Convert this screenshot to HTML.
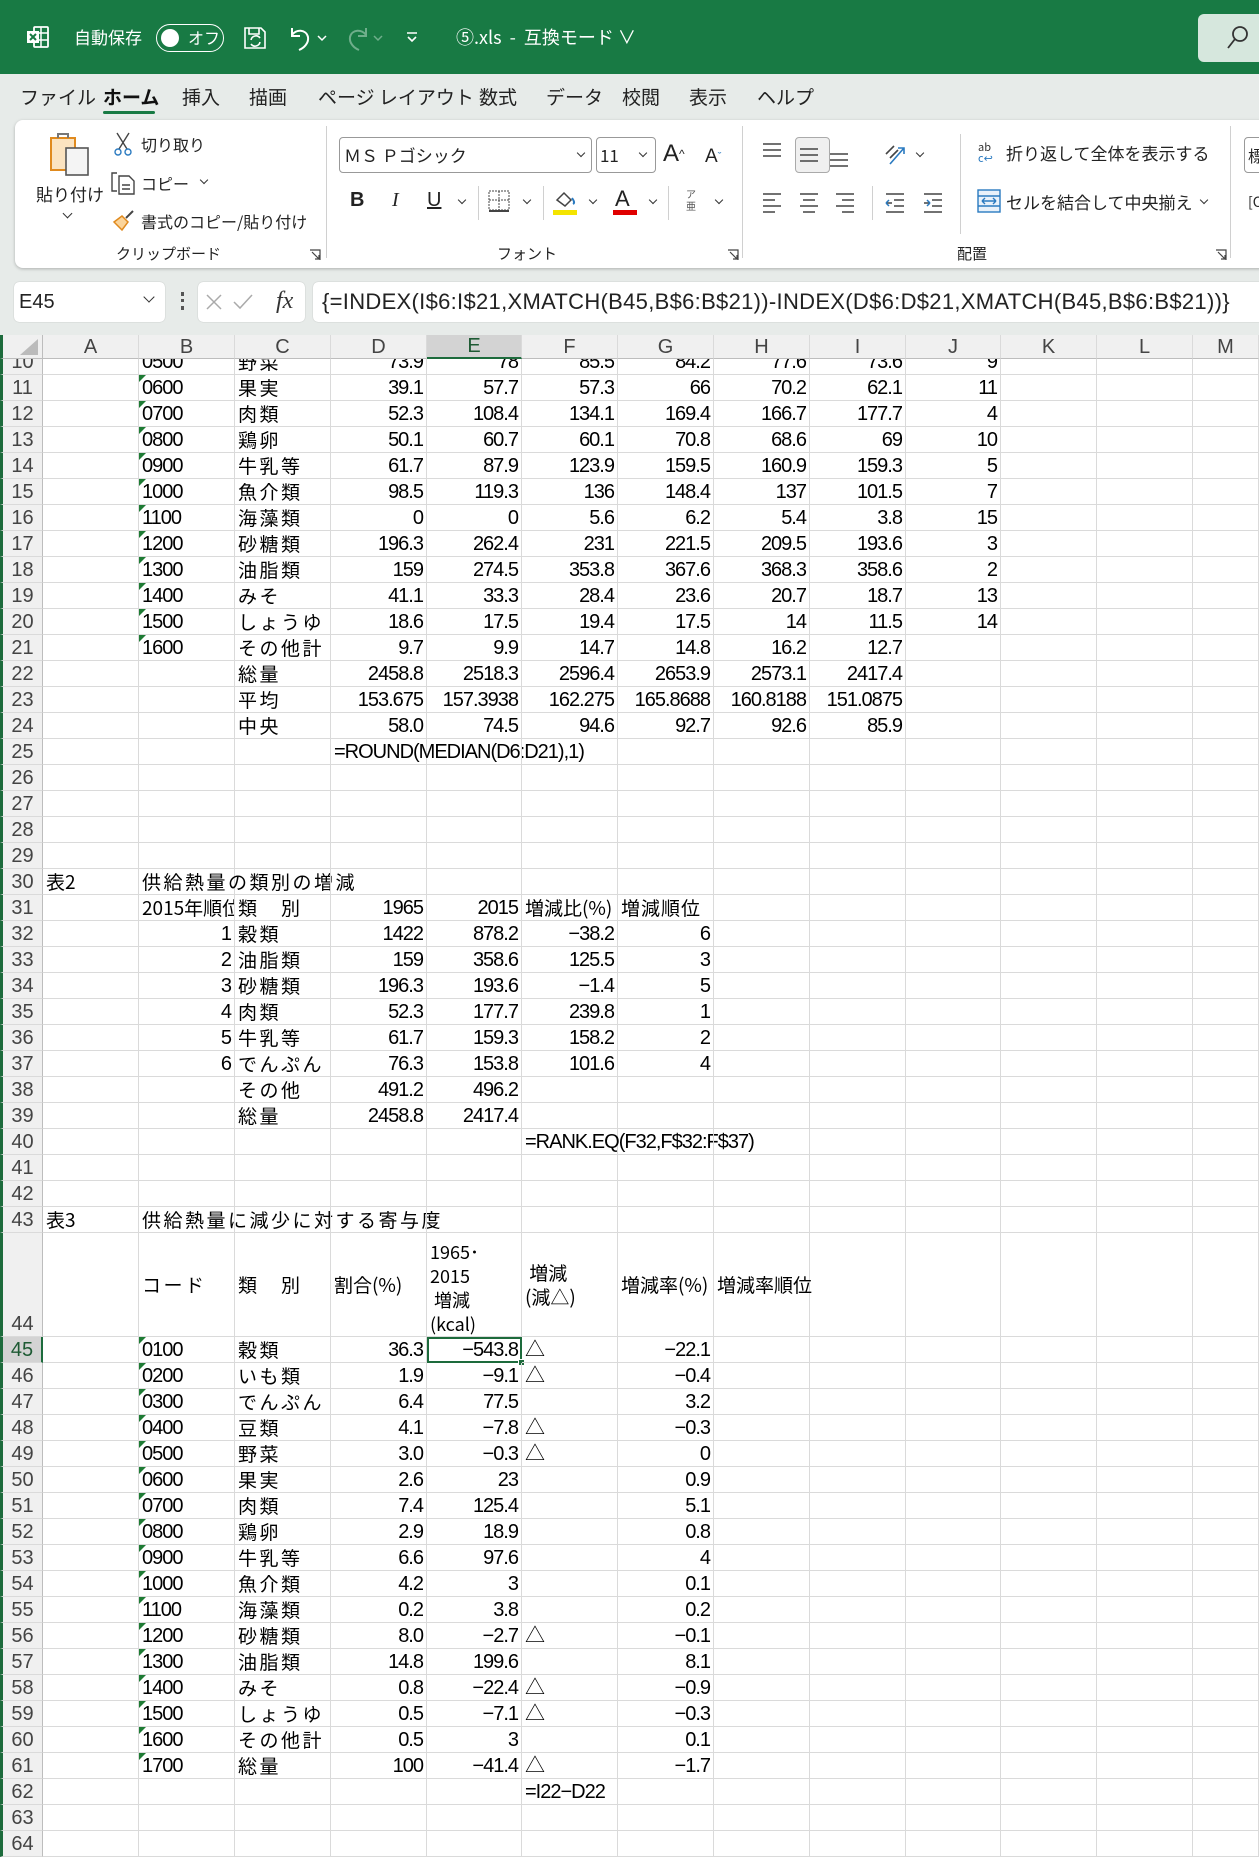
<!DOCTYPE html>
<html><head><meta charset="utf-8">
<style>
*{margin:0;padding:0;box-sizing:border-box}
body{width:1259px;height:1857px;overflow:hidden;background:#fff;font-family:"Liberation Sans","Noto Sans CJK JP",sans-serif;position:relative;color:#000}
.abs{position:absolute}
.jp{font-family:"Noto Sans CJK JP",sans-serif}
#title{left:0;top:0;width:1259px;height:74px;background:#187a44;color:#fff}
#tabs{left:0;top:74px;width:1259px;height:261px;background:#e7ebe9}
.tab{position:absolute;top:84px;font-size:19px;color:#222;font-family:"Noto Sans CJK JP",sans-serif;line-height:26px}
#card{left:15px;top:120px;width:1260px;height:148px;background:#fff;border-radius:8px;box-shadow:0 1px 3px rgba(0,0,0,.25)}
.rt{position:absolute;font-size:16px;color:#222;font-family:"Noto Sans CJK JP",sans-serif;line-height:20px;white-space:nowrap}
.sep{position:absolute;width:1px;background:#d0d0d0}
.chev{position:absolute;width:7px;height:7px;border-right:1.5px solid #333;border-bottom:1.5px solid #333;transform:rotate(45deg)}
.box{position:absolute;background:#fff;border-radius:5px;box-shadow:0 0 1px rgba(0,0,0,.3)}
#grid{left:0;top:335px;width:1259px}
.r{display:flex;width:1259px;overflow:hidden;background:#fff}
.r>div{position:relative;height:100%;border-right:1px solid #dadada;border-bottom:1px solid #dadada;display:flex;align-items:flex-end;white-space:nowrap;padding:0 3px 0 3px;font-size:20px;line-height:24px;letter-spacing:-1px;font-family:"Liberation Sans Narrow","Liberation Sans","Noto Sans CJK JP",sans-serif}
.r>div:nth-child(1){width:43px;border-left:3px solid #1d6b3c;background:#f0f0f0;color:#444;justify-content:center;font-size:20px;letter-spacing:0;border-right:1px solid #bdbdbd;border-bottom:1px solid #dadada}
.r>div:nth-child(2),.r>div:nth-child(3),.r>div:nth-child(4),.r>div:nth-child(5),.r>div:nth-child(7),.r>div:nth-child(8),.r>div:nth-child(9),.r>div:nth-child(10),.r>div:nth-child(12),.r>div:nth-child(13){width:96px}
.r>div:nth-child(6),.r>div:nth-child(11){width:95px}
.r>div:nth-child(14){width:66px}
.r>div:nth-child(n+5):nth-child(-n+11){justify-content:flex-end}
.r>div.L{justify-content:flex-start!important}
.r>div.n{justify-content:flex-end}
.r>div.j{font-family:"Noto Sans CJK JP",sans-serif;font-size:19px;letter-spacing:2.5px}
.r>div.j0{letter-spacing:0}
.t::before{content:"";position:absolute;left:0;top:0;border-top:7px solid #1e7b34;border-right:7px solid transparent}
.h>div{background:#f0f0f0;justify-content:center!important;align-items:center!important;color:#444;font-size:20px;letter-spacing:0!important;border-bottom:1px solid #bdbdbd!important}
.clip{overflow:hidden}
</style></head><body>
<div id="title" class="abs">
  <svg class="abs" style="left:26px;top:25px" width="24" height="24" viewBox="0 0 24 24"><rect x="8" y="2" width="14" height="20" rx="1" fill="none" stroke="#fff" stroke-width="1.8"/><line x1="15" y1="2" x2="15" y2="22" stroke="#fff" stroke-width="1.5"/><line x1="8" y1="8" x2="22" y2="8" stroke="#fff" stroke-width="1.5"/><line x1="8" y1="15" x2="22" y2="15" stroke="#fff" stroke-width="1.5"/><rect x="1" y="6" width="12" height="12" fill="#fff"/><path d="M4 9l6 6M10 9l-6 6" stroke="#187a44" stroke-width="2"/></svg>
  <div class="abs jp" style="left:74px;top:24px;font-size:17px;line-height:26px">自動保存</div>
  <div class="abs" style="left:156px;top:24px;width:68px;height:28px;border:1.5px solid #fff;border-radius:14px"></div>
  <div class="abs" style="left:161px;top:29px;width:18px;height:18px;border-radius:9px;background:#fff"></div>
  <div class="abs jp" style="left:188px;top:25px;font-size:16px;line-height:24px">オフ</div>
  <svg class="abs" style="left:242px;top:25px" width="26" height="26" viewBox="0 0 26 26" fill="none" stroke="#fff" stroke-width="1.6"><path d="M3 3h16l4 4v16H3z"/><path d="M7 3v6h10V3"/><path d="M9 19a5 5 0 0 0 9-2M18 13a5 5 0 0 0-9 2"/></svg>
  <svg class="abs" style="left:286px;top:24px" width="44" height="28" viewBox="0 0 44 28" fill="none" stroke="#fff" stroke-width="2"><path d="M6 4v8h8"/><path d="M6 11c4-6 14-6 16 2 1 6-4 11-9 13"/><path d="M32 12l4 4 4-4" stroke-width="1.5"/></svg>
  <svg class="abs" style="left:344px;top:24px" width="44" height="28" viewBox="0 0 44 28" fill="none" stroke="#6fae8b" stroke-width="2"><path d="M22 4v8h-8"/><path d="M22 11c-4-6-14-6-16 2-1 6 4 11 9 13"/><path d="M30 12l4 4 4-4" stroke-width="1.5"/></svg>
  <svg class="abs" style="left:405px;top:30px" width="14" height="14" viewBox="0 0 14 14" fill="none" stroke="#fff" stroke-width="1.6"><path d="M2 3h10M3 7l4 4 4-4"/></svg>
  <div class="abs jp" style="left:456px;top:24px;font-size:18px;line-height:26px;white-space:nowrap">⑤.xls &nbsp;-&nbsp; 互換モード ∨</div>
  <div class="abs" style="left:1198px;top:14px;width:70px;height:48px;background:#d6e7dd;border-radius:6px"></div>
  <svg class="abs" style="left:1226px;top:24px" width="24" height="28" viewBox="0 0 24 28" fill="none" stroke="#333" stroke-width="1.8"><circle cx="14" cy="10" r="7"/><path d="M9 15L2 24"/></svg>
</div>
<div id="tabs" class="abs"></div>
<div class="tab" style="left:20px">ファイル</div>
<div class="tab" style="left:103px;font-weight:bold;color:#111">ホーム</div>
<div class="abs" style="left:103px;top:111px;width:52px;height:3px;background:#187a44;border-radius:2px"></div>
<div class="tab" style="left:182px">挿入</div>
<div class="tab" style="left:249px">描画</div>
<div class="tab" style="left:318px">ページ レイアウト</div>
<div class="tab" style="left:479px">数式</div>
<div class="tab" style="left:546px">データ</div>
<div class="tab" style="left:622px">校閲</div>
<div class="tab" style="left:689px">表示</div>
<div class="tab" style="left:757px">ヘルプ</div>
<div id="card" class="abs"></div>
<svg class="abs" style="left:48px;top:131px" width="46" height="48" viewBox="0 0 46 48"><rect x="3" y="7" width="24" height="32" fill="#fbe3c0" stroke="#e08a1e" stroke-width="2"/><path d="M10 7V3h10v4" fill="none" stroke="#777" stroke-width="2"/><rect x="18" y="17" width="22" height="27" fill="#f4f4f4" stroke="#555" stroke-width="1.6"/></svg>
<div class="rt" style="left:36px;top:184px;font-size:17px">貼り付け</div>
<div class="chev" style="left:64px;top:210px"></div>
<svg class="abs" style="left:113px;top:131px" width="20" height="26" viewBox="0 0 20 26" fill="none" stroke="#444" stroke-width="1.4"><path d="M4 2l10 16M16 2L6 18"/><circle cx="5" cy="21" r="3" stroke="#2a7ac0"/><circle cx="15" cy="21" r="3" stroke="#2a7ac0"/></svg>
<div class="rt" style="left:141px;top:134px">切り取り</div>
<svg class="abs" style="left:110px;top:170px" width="26" height="26" viewBox="0 0 26 26" fill="none" stroke="#444" stroke-width="1.4"><path d="M7 3H2v18h5"/><path d="M9 6h10l5 5v13H9z"/><path d="M12 15h8M12 19h8"/></svg>
<div class="rt" style="left:141px;top:173px">コピー</div>
<div class="chev" style="left:201px;top:177px;width:6px;height:6px"></div>
<svg class="abs" style="left:112px;top:208px" width="24" height="24" viewBox="0 0 24 24"><path d="M2 14l8-6 6 6-6 8z" fill="#fbd49a" stroke="#e08a1e" stroke-width="1.5"/><path d="M14 10l7-7" stroke="#444" stroke-width="2"/></svg>
<div class="rt" style="left:141px;top:211px">書式のコピー/貼り付け</div>
<div class="rt" style="left:116px;top:244px;font-size:15px">クリップボード</div>
<svg class="abs" style="left:309px;top:249px" width="12" height="12" viewBox="0 0 12 12" fill="none" stroke="#444" stroke-width="1.2"><path d="M1 1h10v10M3 3l7 7M6 10h4V6"/></svg>
<div class="sep" style="left:326px;top:126px;height:132px"></div>
<div class="abs" style="left:339px;top:137px;width:253px;height:36px;border:1px solid #999;border-radius:4px"></div>
<div class="rt" style="left:344px;top:145px;font-size:17px">ＭＳ Ｐゴシック</div>
<div class="chev" style="left:578px;top:150px;width:6px;height:6px"></div>
<div class="abs" style="left:596px;top:137px;width:60px;height:36px;border:1px solid #999;border-radius:4px"></div>
<div class="rt" style="left:600px;top:145px;font-size:17px">11</div>
<div class="chev" style="left:640px;top:150px;width:6px;height:6px"></div>
<div class="rt" style="left:663px;top:140px;font-size:24px;line-height:28px;font-family:'Liberation Sans'">A<span style="font-size:12px;vertical-align:top">^</span></div>
<div class="rt" style="left:705px;top:145px;font-size:19px;line-height:24px;font-family:'Liberation Sans'">A<span style="font-size:11px;vertical-align:top;color:#2a7ac0">ˇ</span></div>
<div class="rt" style="left:350px;top:190px;font-size:20px;font-weight:bold;font-family:'Liberation Sans'">B</div>
<div class="rt" style="left:392px;top:190px;font-size:20px;font-style:italic;font-family:'Liberation Serif'">I</div>
<div class="rt" style="left:427px;top:190px;font-size:20px;text-decoration:underline;font-family:'Liberation Sans'">U</div>
<div class="chev" style="left:459px;top:197px;width:6px;height:6px"></div>
<div class="sep" style="left:478px;top:186px;height:34px"></div>
<svg class="abs" style="left:488px;top:190px" width="22" height="22" viewBox="0 0 22 22" fill="none" stroke="#444" stroke-width="1" stroke-dasharray="2 1"><rect x="1" y="1" width="20" height="19"/><path d="M11 1v19M1 10h20"/><path d="M1 21h20" stroke-dasharray="none" stroke-width="2"/></svg>
<div class="chev" style="left:524px;top:197px;width:6px;height:6px"></div>
<div class="sep" style="left:543px;top:186px;height:34px"></div>
<svg class="abs" style="left:552px;top:188px" width="26" height="28" viewBox="0 0 26 28"><path d="M5 12l7-7 7 7-6 6z" fill="none" stroke="#444" stroke-width="1.5"/><path d="M20 10c2 3 3 5 1 6" stroke="#2a7ac0" stroke-width="2" fill="none"/><rect x="1" y="22" width="24" height="5" fill="#f4e400"/></svg>
<div class="chev" style="left:590px;top:197px;width:6px;height:6px"></div>
<div class="rt" style="left:615px;top:186px;font-size:22px;line-height:26px;font-family:'Liberation Sans'">A</div>
<div class="abs" style="left:613px;top:210px;width:24px;height:5px;background:#e00000"></div>
<div class="chev" style="left:650px;top:197px;width:6px;height:6px"></div>
<div class="sep" style="left:668px;top:186px;height:34px"></div>
<div class="rt" style="left:686px;top:188px;font-size:10px;line-height:12px;color:#555">ア<br>亜</div>
<div class="chev" style="left:716px;top:197px;width:6px;height:6px"></div>
<div class="rt" style="left:497px;top:244px;font-size:15px">フォント</div>
<svg class="abs" style="left:727px;top:249px" width="12" height="12" viewBox="0 0 12 12" fill="none" stroke="#444" stroke-width="1.2"><path d="M1 1h10v10M3 3l7 7M6 10h4V6"/></svg>
<div class="sep" style="left:742px;top:126px;height:132px"></div>
<div class="abs" style="left:795px;top:137px;width:35px;height:36px;border:1px solid #aaa;border-radius:4px;background:rgba(0,0,0,.06)"></div>
<svg class="abs" style="left:760px;top:140px" width="90" height="30" viewBox="0 0 90 30" stroke="#444" stroke-width="1.5"><path d="M3 4h18M3 10h18M3 16h18"/><path d="M40 9h18M40 15h18M40 21h18"/><path d="M70 14h18M70 20h18M70 26h18"/></svg>
<svg class="abs" style="left:882px;top:140px" width="26" height="26" viewBox="0 0 26 26" fill="none" stroke-width="1.6"><path d="M4 14l8-8M8 18l8-8" stroke="#444"/><path d="M8 24L22 8M16 8h6v6" stroke="#2a7ac0"/></svg>
<div class="chev" style="left:917px;top:150px;width:6px;height:6px"></div>
<svg class="abs" style="left:760px;top:190px" width="200" height="26" viewBox="0 0 200 26" stroke="#444" stroke-width="1.5" fill="none"><path d="M3 4h18M3 10h12M3 16h18M3 22h12"/><path d="M40 4h18M43 10h12M40 16h18M43 22h12"/><path d="M76 4h18M82 10h12M76 16h18M82 22h12"/><path d="M126 4h18M134 10h10M134 16h10M126 22h18M132 13h-6"/><path d="M164 4h18M172 10h10M172 16h10M164 22h18M164 13h6"/><path d="M126 13l3-3M126 13l3 3M170 13l-3-3M170 13l-3 3" stroke="#2a7ac0"/></svg>
<div class="sep" style="left:872px;top:186px;height:34px"></div>
<div class="sep" style="left:960px;top:134px;height:100px"></div>
<div class="rt" style="left:978px;top:142px;font-size:11px;line-height:11px;color:#333">ab<br><span style="color:#2a7ac0">c↩</span></div>
<div class="rt" style="left:1006px;top:143px;font-size:17px">折り返して全体を表示する</div>
<svg class="abs" style="left:977px;top:189px" width="24" height="24" viewBox="0 0 24 24" fill="none" stroke="#2a7ac0" stroke-width="1.4"><rect x="1" y="1" width="22" height="22" fill="#e8f1fa"/><path d="M1 7h22M1 17h22M5 12h14M5 12l3-3M5 12l3 3M19 12l-3-3M19 12l-3 3"/></svg>
<div class="rt" style="left:1006px;top:192px;font-size:17px">セルを結合して中央揃え</div>
<div class="chev" style="left:1201px;top:197px;width:6px;height:6px"></div>
<div class="rt" style="left:957px;top:244px;font-size:15px">配置</div>
<svg class="abs" style="left:1215px;top:249px" width="12" height="12" viewBox="0 0 12 12" fill="none" stroke="#444" stroke-width="1.2"><path d="M1 1h10v10M3 3l7 7M6 10h4V6"/></svg>
<div class="sep" style="left:1230px;top:126px;height:132px"></div>
<div class="abs" style="left:1244px;top:137px;width:30px;height:36px;border:1px solid #999;border-radius:4px"></div>
<div class="rt" style="left:1248px;top:145px">標</div>
<div class="rt" style="left:1248px;top:192px;font-size:14px">[C</div>
<div class="box" style="left:14px;top:282px;width:151px;height:40px"></div>
<div class="abs" style="left:19px;top:288px;font-size:20px;line-height:28px;color:#222">E45</div>
<div class="chev" style="left:145px;top:293px;width:8px;height:8px"></div>
<div class="abs" style="left:181px;top:292px;width:4px;height:18px;border-left:3px dotted #555"></div>
<div class="box" style="left:198px;top:282px;width:107px;height:40px"></div>
<svg class="abs" style="left:204px;top:292px" width="56" height="20" viewBox="0 0 56 20" fill="none" stroke="#aaa" stroke-width="1.5"><path d="M3 3l14 14M17 3L3 17"/><path d="M30 10l6 6 12-13"/></svg>
<div class="abs" style="left:276px;top:284px;font-family:'Liberation Serif';font-style:italic;font-size:24px;line-height:34px;color:#333">fx</div>
<div class="box" style="left:313px;top:282px;width:960px;height:40px"></div>
<div class="abs" style="left:322px;top:286px;font-size:22px;line-height:32px;color:#222;white-space:nowrap;letter-spacing:0.3px">{=INDEX(I$6:I$21,XMATCH(B45,B$6:B$21))-INDEX(D$6:D$21,XMATCH(B45,B$6:B$21))}</div>

<div id="grid" class="abs">
<div class="r h" style="height:24px"><div style="background:#f0f0f0"><svg width="22" height="20" style="margin-left:12px"><path d="M20 2v16H2z" fill="#bbb"/></svg></div><div>A</div><div>B</div><div>C</div><div>D</div><div style="background:#d3d3d3;border-bottom:2px solid #1d6b3c!important;color:#1d5a33">E</div><div>F</div><div>G</div><div>H</div><div>I</div><div>J</div><div>K</div><div>L</div><div>M</div></div>
<div class="r" style="height:16px"><div>10</div><div></div><div>0500</div><div class="j">野菜</div><div>73.9</div><div>78</div><div>85.5</div><div>84.2</div><div>77.6</div><div>73.6</div><div>9</div><div></div><div></div><div></div></div>
<div class="r" style="height:26px"><div>11</div><div></div><div class="t">0600</div><div class="j">果実</div><div>39.1</div><div>57.7</div><div>57.3</div><div>66</div><div>70.2</div><div>62.1</div><div>11</div><div></div><div></div><div></div></div>
<div class="r" style="height:26px"><div>12</div><div></div><div class="t">0700</div><div class="j">肉類</div><div>52.3</div><div>108.4</div><div>134.1</div><div>169.4</div><div>166.7</div><div>177.7</div><div>4</div><div></div><div></div><div></div></div>
<div class="r" style="height:26px"><div>13</div><div></div><div class="t">0800</div><div class="j">鶏卵</div><div>50.1</div><div>60.7</div><div>60.1</div><div>70.8</div><div>68.6</div><div>69</div><div>10</div><div></div><div></div><div></div></div>
<div class="r" style="height:26px"><div>14</div><div></div><div class="t">0900</div><div class="j">牛乳等</div><div>61.7</div><div>87.9</div><div>123.9</div><div>159.5</div><div>160.9</div><div>159.3</div><div>5</div><div></div><div></div><div></div></div>
<div class="r" style="height:26px"><div>15</div><div></div><div class="t">1000</div><div class="j">魚介類</div><div>98.5</div><div>119.3</div><div>136</div><div>148.4</div><div>137</div><div>101.5</div><div>7</div><div></div><div></div><div></div></div>
<div class="r" style="height:26px"><div>16</div><div></div><div class="t">1100</div><div class="j">海藻類</div><div>0</div><div>0</div><div>5.6</div><div>6.2</div><div>5.4</div><div>3.8</div><div>15</div><div></div><div></div><div></div></div>
<div class="r" style="height:26px"><div>17</div><div></div><div class="t">1200</div><div class="j">砂糖類</div><div>196.3</div><div>262.4</div><div>231</div><div>221.5</div><div>209.5</div><div>193.6</div><div>3</div><div></div><div></div><div></div></div>
<div class="r" style="height:26px"><div>18</div><div></div><div class="t">1300</div><div class="j">油脂類</div><div>159</div><div>274.5</div><div>353.8</div><div>367.6</div><div>368.3</div><div>358.6</div><div>2</div><div></div><div></div><div></div></div>
<div class="r" style="height:26px"><div>19</div><div></div><div class="t">1400</div><div class="j">みそ</div><div>41.1</div><div>33.3</div><div>28.4</div><div>23.6</div><div>20.7</div><div>18.7</div><div>13</div><div></div><div></div><div></div></div>
<div class="r" style="height:26px"><div>20</div><div></div><div class="t">1500</div><div class="j">しょうゆ</div><div>18.6</div><div>17.5</div><div>19.4</div><div>17.5</div><div>14</div><div>11.5</div><div>14</div><div></div><div></div><div></div></div>
<div class="r" style="height:26px"><div>21</div><div></div><div class="t">1600</div><div class="j">その他計</div><div>9.7</div><div>9.9</div><div>14.7</div><div>14.8</div><div>16.2</div><div>12.7</div><div></div><div></div><div></div><div></div></div>
<div class="r" style="height:26px"><div>22</div><div></div><div></div><div class="j">総量</div><div>2458.8</div><div>2518.3</div><div>2596.4</div><div>2653.9</div><div>2573.1</div><div>2417.4</div><div></div><div></div><div></div><div></div></div>
<div class="r" style="height:26px"><div>23</div><div></div><div></div><div class="j">平均</div><div>153.675</div><div>157.3938</div><div>162.275</div><div>165.8688</div><div>160.8188</div><div>151.0875</div><div></div><div></div><div></div><div></div></div>
<div class="r" style="height:26px"><div>24</div><div></div><div></div><div class="j">中央</div><div>58.0</div><div>74.5</div><div>94.6</div><div>92.7</div><div>92.6</div><div>85.9</div><div></div><div></div><div></div><div></div></div>
<div class="r" style="height:26px"><div>25</div><div></div><div></div><div></div><div class="L">=ROUND(MEDIAN(D6:D21),1)</div><div></div><div></div><div></div><div></div><div></div><div></div><div></div><div></div><div></div></div>
<div class="r" style="height:26px"><div>26</div><div></div><div></div><div></div><div></div><div></div><div></div><div></div><div></div><div></div><div></div><div></div><div></div><div></div></div>
<div class="r" style="height:26px"><div>27</div><div></div><div></div><div></div><div></div><div></div><div></div><div></div><div></div><div></div><div></div><div></div><div></div><div></div></div>
<div class="r" style="height:26px"><div>28</div><div></div><div></div><div></div><div></div><div></div><div></div><div></div><div></div><div></div><div></div><div></div><div></div><div></div></div>
<div class="r" style="height:26px"><div>29</div><div></div><div></div><div></div><div></div><div></div><div></div><div></div><div></div><div></div><div></div><div></div><div></div><div></div></div>
<div class="r" style="height:26px"><div>30</div><div class="j j0">表2</div><div class="j">供給熱量の類別の増減</div><div></div><div></div><div></div><div></div><div></div><div></div><div></div><div></div><div></div><div></div><div></div></div>
<div class="r" style="height:26px"><div>31</div><div></div><div class="j j0 clip">2015年順位</div><div class="j">類　別</div><div>1965</div><div>2015</div><div class="j j0 L">増減比(%)</div><div class="j L" style="letter-spacing:1px">増減順位</div><div></div><div></div><div></div><div></div><div></div><div></div></div>
<div class="r" style="height:26px"><div>32</div><div></div><div class="n">1</div><div class="j">穀類</div><div>1422</div><div>878.2</div><div>−38.2</div><div>6</div><div></div><div></div><div></div><div></div><div></div><div></div></div>
<div class="r" style="height:26px"><div>33</div><div></div><div class="n">2</div><div class="j">油脂類</div><div>159</div><div>358.6</div><div>125.5</div><div>3</div><div></div><div></div><div></div><div></div><div></div><div></div></div>
<div class="r" style="height:26px"><div>34</div><div></div><div class="n">3</div><div class="j">砂糖類</div><div>196.3</div><div>193.6</div><div>−1.4</div><div>5</div><div></div><div></div><div></div><div></div><div></div><div></div></div>
<div class="r" style="height:26px"><div>35</div><div></div><div class="n">4</div><div class="j">肉類</div><div>52.3</div><div>177.7</div><div>239.8</div><div>1</div><div></div><div></div><div></div><div></div><div></div><div></div></div>
<div class="r" style="height:26px"><div>36</div><div></div><div class="n">5</div><div class="j">牛乳等</div><div>61.7</div><div>159.3</div><div>158.2</div><div>2</div><div></div><div></div><div></div><div></div><div></div><div></div></div>
<div class="r" style="height:26px"><div>37</div><div></div><div class="n">6</div><div class="j">でんぷん</div><div>76.3</div><div>153.8</div><div>101.6</div><div>4</div><div></div><div></div><div></div><div></div><div></div><div></div></div>
<div class="r" style="height:26px"><div>38</div><div></div><div></div><div class="j">その他</div><div>491.2</div><div>496.2</div><div></div><div></div><div></div><div></div><div></div><div></div><div></div><div></div></div>
<div class="r" style="height:26px"><div>39</div><div></div><div></div><div class="j">総量</div><div>2458.8</div><div>2417.4</div><div></div><div></div><div></div><div></div><div></div><div></div><div></div><div></div></div>
<div class="r" style="height:26px"><div>40</div><div></div><div></div><div></div><div></div><div></div><div class="L">=RANK.EQ(F32,F$32:F$37)</div><div></div><div></div><div></div><div></div><div></div><div></div><div></div></div>
<div class="r" style="height:26px"><div>41</div><div></div><div></div><div></div><div></div><div></div><div></div><div></div><div></div><div></div><div></div><div></div><div></div><div></div></div>
<div class="r" style="height:26px"><div>42</div><div></div><div></div><div></div><div></div><div></div><div></div><div></div><div></div><div></div><div></div><div></div><div></div><div></div></div>
<div class="r" style="height:26px"><div>43</div><div class="j j0">表3</div><div class="j">供給熱量に減少に対する寄与度</div><div></div><div></div><div></div><div></div><div></div><div></div><div></div><div></div><div></div><div></div><div></div></div>
<div class="r" style="height:104px"><div>44</div><div></div><div class="j" style="align-items:center">コード</div><div class="j" style="align-items:center">類　別</div><div class="j j0 L" style="align-items:center">割合(%)</div><div class="j j0 L" style="align-items:flex-end;white-space:normal;line-height:24px;font-size:18px">1965･<br>2015<br>&nbsp;増減<br>(kcal)</div><div class="j j0 L" style="align-items:center;white-space:normal;line-height:24px">&nbsp;増減<br>(減△)</div><div class="j j0 L" style="align-items:center">増減率(%)</div><div class="j j0 L" style="align-items:center">増減率順位</div><div></div><div></div><div></div><div></div><div></div></div>
<div class="r" style="height:26px;overflow:visible"><div style="background:#d3d3d3;color:#1d5a33;border-right:2px solid #1d6b3c">45</div><div></div><div class="t">0100</div><div class="j">穀類</div><div>36.3</div><div style="outline:2px solid #1d6b3c;outline-offset:-2px">−543.8<span style="position:absolute;right:-4px;bottom:-4px;width:7px;height:7px;background:#1d6b3c;border:1px solid #fff"></span></div><div class="L">△</div><div>−22.1</div><div></div><div></div><div></div><div></div><div></div><div></div></div>
<div class="r" style="height:26px"><div>46</div><div></div><div class="t">0200</div><div class="j">いも類</div><div>1.9</div><div>−9.1</div><div class="L">△</div><div>−0.4</div><div></div><div></div><div></div><div></div><div></div><div></div></div>
<div class="r" style="height:26px"><div>47</div><div></div><div class="t">0300</div><div class="j">でんぷん</div><div>6.4</div><div>77.5</div><div class="L"></div><div>3.2</div><div></div><div></div><div></div><div></div><div></div><div></div></div>
<div class="r" style="height:26px"><div>48</div><div></div><div class="t">0400</div><div class="j">豆類</div><div>4.1</div><div>−7.8</div><div class="L">△</div><div>−0.3</div><div></div><div></div><div></div><div></div><div></div><div></div></div>
<div class="r" style="height:26px"><div>49</div><div></div><div class="t">0500</div><div class="j">野菜</div><div>3.0</div><div>−0.3</div><div class="L">△</div><div>0</div><div></div><div></div><div></div><div></div><div></div><div></div></div>
<div class="r" style="height:26px"><div>50</div><div></div><div class="t">0600</div><div class="j">果実</div><div>2.6</div><div>23</div><div class="L"></div><div>0.9</div><div></div><div></div><div></div><div></div><div></div><div></div></div>
<div class="r" style="height:26px"><div>51</div><div></div><div class="t">0700</div><div class="j">肉類</div><div>7.4</div><div>125.4</div><div class="L"></div><div>5.1</div><div></div><div></div><div></div><div></div><div></div><div></div></div>
<div class="r" style="height:26px"><div>52</div><div></div><div class="t">0800</div><div class="j">鶏卵</div><div>2.9</div><div>18.9</div><div class="L"></div><div>0.8</div><div></div><div></div><div></div><div></div><div></div><div></div></div>
<div class="r" style="height:26px"><div>53</div><div></div><div class="t">0900</div><div class="j">牛乳等</div><div>6.6</div><div>97.6</div><div class="L"></div><div>4</div><div></div><div></div><div></div><div></div><div></div><div></div></div>
<div class="r" style="height:26px"><div>54</div><div></div><div class="t">1000</div><div class="j">魚介類</div><div>4.2</div><div>3</div><div class="L"></div><div>0.1</div><div></div><div></div><div></div><div></div><div></div><div></div></div>
<div class="r" style="height:26px"><div>55</div><div></div><div class="t">1100</div><div class="j">海藻類</div><div>0.2</div><div>3.8</div><div class="L"></div><div>0.2</div><div></div><div></div><div></div><div></div><div></div><div></div></div>
<div class="r" style="height:26px"><div>56</div><div></div><div class="t">1200</div><div class="j">砂糖類</div><div>8.0</div><div>−2.7</div><div class="L">△</div><div>−0.1</div><div></div><div></div><div></div><div></div><div></div><div></div></div>
<div class="r" style="height:26px"><div>57</div><div></div><div class="t">1300</div><div class="j">油脂類</div><div>14.8</div><div>199.6</div><div class="L"></div><div>8.1</div><div></div><div></div><div></div><div></div><div></div><div></div></div>
<div class="r" style="height:26px"><div>58</div><div></div><div class="t">1400</div><div class="j">みそ</div><div>0.8</div><div>−22.4</div><div class="L">△</div><div>−0.9</div><div></div><div></div><div></div><div></div><div></div><div></div></div>
<div class="r" style="height:26px"><div>59</div><div></div><div class="t">1500</div><div class="j">しょうゆ</div><div>0.5</div><div>−7.1</div><div class="L">△</div><div>−0.3</div><div></div><div></div><div></div><div></div><div></div><div></div></div>
<div class="r" style="height:26px"><div>60</div><div></div><div class="t">1600</div><div class="j">その他計</div><div>0.5</div><div>3</div><div class="L"></div><div>0.1</div><div></div><div></div><div></div><div></div><div></div><div></div></div>
<div class="r" style="height:26px"><div>61</div><div></div><div class="t">1700</div><div class="j">総量</div><div>100</div><div>−41.4</div><div class="L">△</div><div>−1.7</div><div></div><div></div><div></div><div></div><div></div><div></div></div>
<div class="r" style="height:26px"><div>62</div><div></div><div></div><div></div><div></div><div></div><div class="L">=I22−D22</div><div></div><div></div><div></div><div></div><div></div><div></div><div></div></div>
<div class="r" style="height:26px"><div>63</div><div></div><div></div><div></div><div></div><div></div><div></div><div></div><div></div><div></div><div></div><div></div><div></div><div></div></div>
<div class="r" style="height:26px"><div>64</div><div></div><div></div><div></div><div></div><div></div><div></div><div></div><div></div><div></div><div></div><div></div><div></div><div></div></div>
</div>
</body></html>
